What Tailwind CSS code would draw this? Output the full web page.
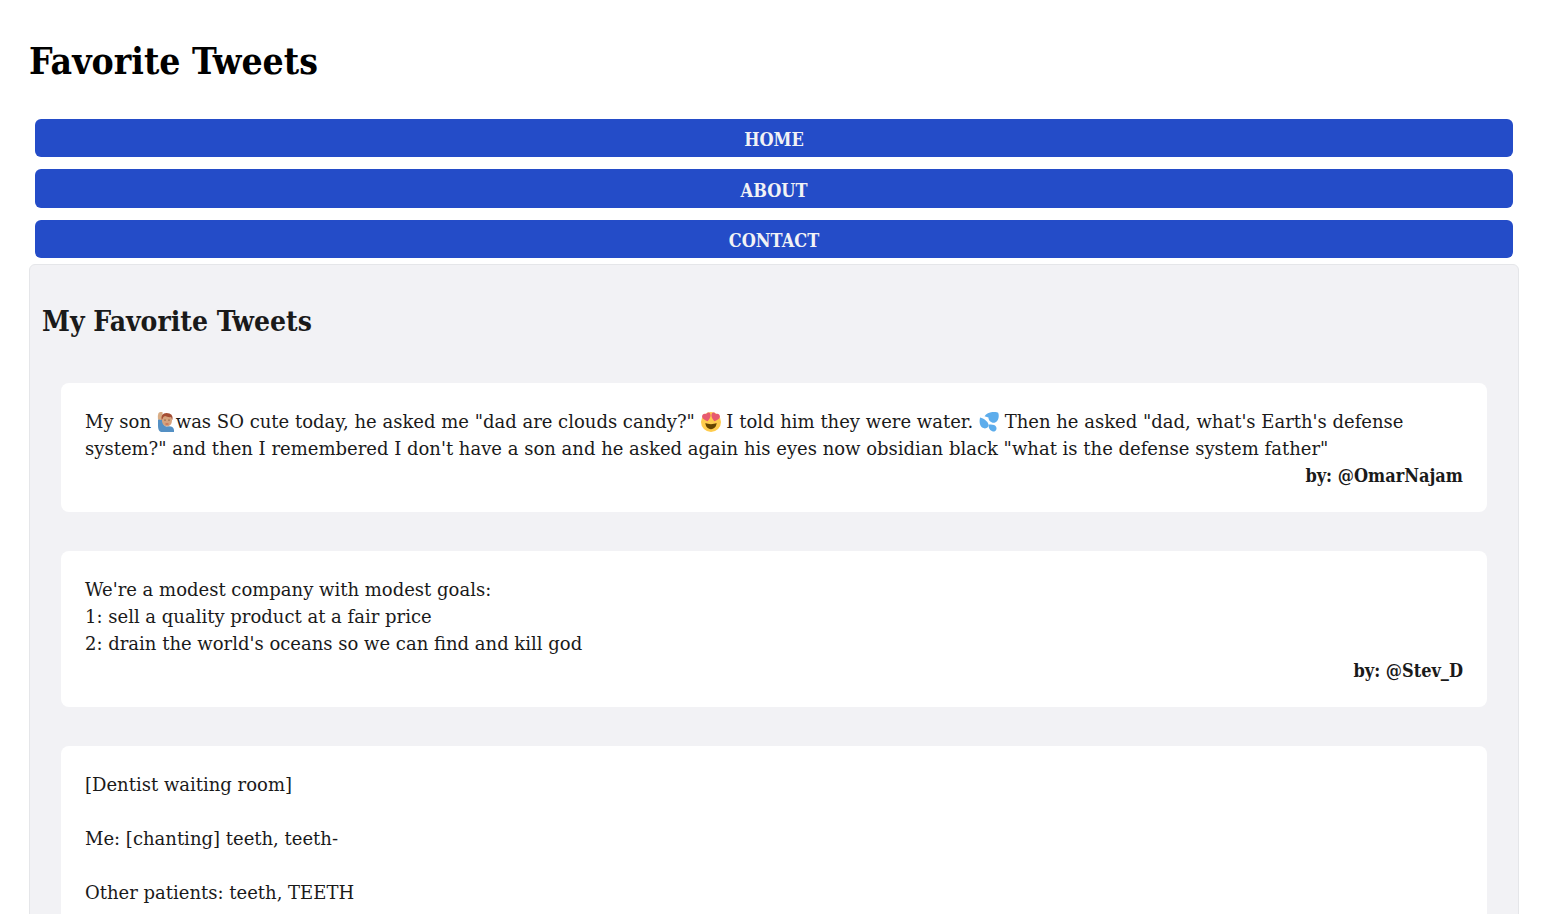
<!DOCTYPE html>
<html lang="en">
<head>
<meta charset="utf-8">
<meta name="viewport" content="width=device-width, initial-scale=1">
<title>Favorite Tweets</title>
<script src="https://cdn.jsdelivr.net/npm/@tailwindcss/browser@4"></script>
</head>
<body class="bg-white px-[29px] pt-[34px] font-['Roboto_Slab','DejaVu_Serif',serif] text-lg leading-[27px] text-[#1a1a1a]">
<header>
  <h1 class="font-['Roboto_Slab','DejaVu_Serif_Condensed','DejaVu_Serif',serif] text-[37px] leading-[54px] font-bold text-black">Favorite Tweets</h1>
  <nav class="mt-[31px] mb-[6px] flex flex-col gap-3 px-[6px] text-center font-['Roboto_Slab','DejaVu_Serif_Condensed','DejaVu_Serif',serif] font-bold text-[#f2f2f5]">
    <a href="#home" class="rounded-md bg-[#244cc8] pt-2 pb-1 leading-[26px]">HOME</a>
    <a href="#about" class="rounded-md bg-[#244cc8] pt-2 pb-1 leading-[27px]">ABOUT</a>
    <a href="#contact" class="rounded-md bg-[#244cc8] pt-2 pb-1 leading-[26px]">CONTACT</a>
  </nav>
</header>
<main class="rounded-md border border-[#e5e6e9] bg-[#f2f2f5] px-3 pt-9 pb-9">
  <h2 class="font-['Roboto_Slab','DejaVu_Serif_Condensed','DejaVu_Serif',serif] text-[28px] leading-[42px] font-bold">My Favorite Tweets</h2>
  <div class="mx-[19px] mt-10 flex flex-col gap-[39px]">
    <article class="rounded-lg bg-white px-6 pt-[25px] pb-[23px]">
      <p>My son <svg class="mr-[2px] inline-block h-5 w-[17px] align-[-4px]" viewBox="0 0 17 20" aria-hidden="true"><path fill="#5490c4" d="M1 8Q1 6.500 3 7L5.500 8Q6 13 9 14.500Q16.500 13 17 18v2H4Q1 19 1 14Z"/><path fill="#d9ad85" d="M1.500 1 3 0h2.500Q6 4 5.500 8L1 7.500Q.5 3 1.500 1"/><ellipse cx="10" cy="8.500" rx="5" ry="6" fill="#d6a27c"/><path fill="#a54e34" d="M4.600 8Q3.500 1.300 9.500 1Q16.500 1 15.500 8Q14.500 7 14 5Q11 5.500 8 4Q6 4.500 5.500 7Z"/><path fill="#70482f" d="M7.500 7.500h1v1.300h-1zM11.500 7.500h1v1.300h-1z"/><path stroke="#bd5743" d="M8.500 12h3"/></svg>was SO cute today, he asked me "dad are clouds candy?" <svg class="inline-block size-5 align-[-4px]" viewBox="0 0 36 36" aria-hidden="true"><circle cx="18" cy="18" r="18" fill="#ffcc4d"/><path fill="#e75a70" d="M16.700 3.500C15.400-.4 10.600.7 9.500 4 5.500 1.600 1.300 4.900 2 9c.7 4 5.700 5.700 10 7.500 3.400-4 6.400-8.500 4.700-13M19.300 3.500C20.600-.4 25.400.7 26.500 4c4-2.400 8.200.9 7.500 5-.7 4-5.700 5.700-10 7.500-3.400-4-6.400-8.500-4.700-13"/><path fill="#664500" d="M8 20c3 1.500 6 2 10 2s7-.5 10-2c0 6-4 11-10 11S8 26 8 20"/></svg> I told him they were water. <svg class="inline-block size-5 align-[-4px]" viewBox="0 0 36 36" aria-hidden="true"><g fill="#5dadec"><path d="M10 7.500C15 0 28-2 34.500 1.500 37 8 35 17 29 19 23 21 17 16 17 10Z"/><path d="M2 10C9 12 16 17 17 22c1 5-4 9-9 7C1 27 0 17 2 10Z"/><path d="M17 23c6-1 12 0 14 4 2 5-2 9-6 8-5-1-8-6-8-12"/></g></svg> Then he asked "dad, what's Earth's defense system?" and then I remembered I don't have a son and he asked again his eyes now obsidian black "what is the defense system father"</p>
      <p class="text-right font-['Roboto_Slab','DejaVu_Serif_Condensed','DejaVu_Serif',serif] font-bold">by: @OmarNajam</p>
    </article>
    <article class="rounded-lg bg-white px-6 pt-[25px] pb-[23px]">
      <p>We're a modest company with modest goals:<br>1: sell a quality product at a fair price<br>2: drain the world's oceans so we can find and kill god</p>
      <p class="text-right font-['Roboto_Slab','DejaVu_Serif_Condensed','DejaVu_Serif',serif] font-bold">by: @Stev_D</p>
    </article>
    <article class="rounded-lg bg-white px-6 pt-[25px] pb-[23px]">
      <p>[Dentist waiting room]<br><br>Me: [chanting] teeth, teeth-<br><br>Other patients: teeth, TEETH</p>
    </article>
  </div>
</main>
</body>
</html>
